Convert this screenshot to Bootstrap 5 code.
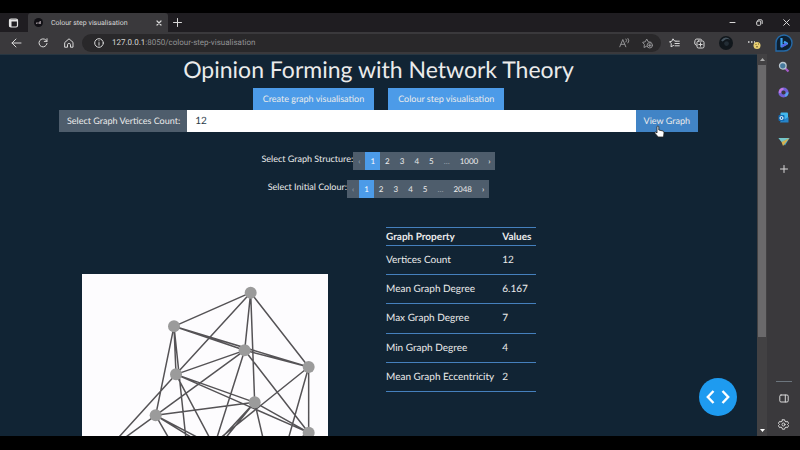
<!DOCTYPE html>
<html lang="en">
<head>
<meta charset="utf-8">
<meta name="viewport" content="width=device-width, initial-scale=1">
<title>Colour step visualisation</title>
<link href="https://cdn.jsdelivr.net/npm/bootstrap@5.3.0/dist/css/bootstrap.min.css" rel="stylesheet">
<style>
  body { font: 9px/14px Lato, sans-serif; background: #000; color: #ebebeb; text-rendering: geometricPrecision; }
  button, input { font: inherit; text-rendering: inherit; }
  svg { display: block; flex: none; }
  .screen { height: 100vh; padding: 13px 0 14px; }
  .chrome-ui { font-family: Roboto, sans-serif; font-size: 7px; color: #d8d8d8; }
  .plain { background: none; border: 0; padding: 0; color: inherit; }
  .line-icon { fill: none; stroke: currentColor; stroke-width: 1; stroke-linecap: round; stroke-linejoin: round; }
  .tab-strip { height: 19px; background: #1f1d21; }
  .browser-tab { width: 140px; background: #3a393c; border-radius: 3px 3px 0 0; padding: 0 6px; margin-left: 9px; }
  .window-buttons { padding-right: 10px; }
  .toolbar { height: 22px; background: #3a393c; padding: 0 7px 0 11px; }
  .tool-icons { gap: 14px; }
  .address { background: #29282a; border-radius: 10px; height: 18px; padding: 0 7px 0 12px; font-size: 8px; }
  .dim { color: #929294; }
  .page { background: #112434; border-top: 1px solid #263642; padding: 0 59px; }
  .page h1 { font-size: 23px; line-height: 29px; font-weight: 400; margin: 0 0 4px; }
  .view-links { gap: 14px; }
  .blue-btn, .slate, .count-box { border: 0; border-radius: 0; padding: 4px 8px; font-size: 9px; line-height: 14px; }
  .blue-btn { background: #4c9be8; color: #ebebeb; }
  .blue-btn:hover { background: #4184c6; color: #fff; }
  .view-links .blue-btn { padding: 4px 10px; }
  .active-btn { background: #4184c6; }
  .slate { background: #4e5d6c; color: #ebebeb; }
  .count-box, .count-box:focus { background: #fff; color: #2b3b49; font-size: 10px; }
  .pager .page-item .page-link { background: #4e5d6c; color: #ebebeb; border: 0; border-radius: 0; margin: 0; padding: 2px 5px; font-size: 8px; line-height: 14px; }
  .pager .page-item.active .page-link { background: #4c9be8; color: #fff; }
  .pager .page-item.disabled .page-link { color: #98a1aa; }
  .second-pager { margin-top: 10px; }
  .results { padding-left: 23px; gap: 58px; margin-top: 29px; }
  .graph-card { background: #fdfcfe; margin-top: 47px; }
  .facts { height: 165px; font-size: 10px; border-top: 1px solid #4580bd; }
  .facts tr { border-bottom: 1px solid #4580bd; }
  .facts thead tr { height: 18px; }
  .facts td, .facts th { padding: 0 8px 0 0; }
  .facts th:last-child { padding-right: 2px; }
  .scroll-track { width: 10px; background: #424143; }
  .scroll-thumb { background: #6a696b; width: 8px; height: 272px; }
  .side-rail { width: 33px; background: #3a393c; padding: 7px 0 6px; }
  .rail-apps { gap: 14px; }
  .dev-button { position: absolute; right: 20px; bottom: 20px; width: 38px; height: 38px; border-radius: 50%; background: #1e9bf0; }
  .hand { position: absolute; right: 33px; bottom: -6px; pointer-events: none; z-index: 6; }
</style>
<script src="https://cdn.jsdelivr.net/npm/bootstrap@5.3.0/dist/js/bootstrap.bundle.min.js"></script>
</head>
<body>
<div class="screen d-flex flex-column overflow-hidden">
  <header class="chrome-ui flex-shrink-0">
    <div class="tab-strip d-flex align-items-stretch">
      <button class="plain d-flex align-items-center ps-2 ms-0" aria-label="Tab actions">
        <svg width="11" height="10" viewBox="0 0 10 10"><rect x="1" y="1" width="8" height="8" rx="1.5" fill="none" stroke="#e4e4e4" stroke-width="1.2"/><path d="M1 1.5h8v2H1zM1 3h2v6H1z" fill="#e4e4e4"/></svg>
      </button>
      <div class="browser-tab d-flex align-items-center">
        <svg width="9" height="9" viewBox="0 0 9 9"><circle cx="4.5" cy="4.500" r="4.500" fill="#111015"/><path d="M2.500 6V4.500M4 6V4M5.500 6V3.500M6.500 6V3" stroke="#8c8389"/></svg>
        <span class="text-nowrap ms-1 ps-1 flex-fill">Colour step visualisation</span>
        <button class="plain" aria-label="Close tab"><svg class="line-icon" width="6" height="6" viewBox="0 0 6 6"><path d="M1 1l4 4M5 1L1 5" stroke-width="1.200"/></svg></button>
      </div>
      <button class="plain ms-1 ps-0" aria-label="New tab"><svg class="line-icon" width="11" height="9" viewBox="0 0 9 9"><path d="M4.500 .5v8M.5 4.500h8"/></svg></button>
      <div class="window-buttons d-flex align-items-center ms-auto gap-3">
        <button class="plain me-1" aria-label="Minimise"><svg class="line-icon" width="7" height="7" viewBox="0 0 7 7"><path d="M1 3.500h5"/></svg></button>
        <button class="plain ms-0 me-1" aria-label="Restore"><svg class="line-icon" width="7" height="7" viewBox="0 0 7 7"><rect x=".7" y="2" width="4" height="4.300" rx="1"/><path d="M2.500 .8h2.700q1 0 1 1v2.700"/></svg></button>
        <button class="plain" aria-label="Close"><svg class="line-icon" width="7" height="7" viewBox="0 0 7 7"><path d="M.7 .7l5.600 5.600M6.300 .7L.7 6.300"/></svg></button>
      </div>
    </div>
    <div class="toolbar d-flex align-items-center">
      <button class="plain" aria-label="Back"><svg class="line-icon" width="11" height="10" viewBox="0 0 11 10"><path d="M10 5H1M5 1L1 5l4 4"/></svg></button>
      <button class="plain ms-3" aria-label="Reload"><svg class="line-icon" width="10" height="10" viewBox="0 0 10 10"><path d="M9 5.500A4 4 0 1 1 8 2.200L9 3.200M9 .7v2.700H6.300"/></svg></button>
      <button class="plain ms-3" aria-label="Home"><svg class="line-icon" width="10" height="10" viewBox="0 0 10 10"><path d="M1 4.300L5 .8l4 3.500V9.200H6.500V6.500Q6.500 5.500 5 5.500T3.500 6.500V9.200H1z"/></svg></button>
      <div class="address flex-fill d-flex align-items-center ms-2 me-2">
        <svg class="line-icon" width="10" height="10" viewBox="0 0 10 10"><circle cx="5" cy="5" r="4.300"/><path d="M5 4.600v2.600M5 2.700v.2"/></svg>
        <span class="ms-2 text-nowrap">127.0.0.1<span class="dim">:8050/colour-step-visualisation</span></span>
        <span class="dim ms-auto d-flex align-items-center gap-2">
          <svg class="line-icon me-1" width="11" height="10" viewBox="0 0 11 10"><path d="M.8 8.800L3.800 1.500l3 7.300M1.900 6.300h3.800M7 1q1.500 1.500 0 3M9 .5q2 2.500 0 4.500"/></svg>
          <svg class="line-icon" width="12" height="11" viewBox="0 0 12 11"><path d="M4.500 8.300L2 9.500l.4-3L.6 4.300l2.700-.5L4.700 1l1.500 2.800 2.800.5"/><circle cx="7.800" cy="7.300" r="2.700"/><path d="M7.800 6v2.600M6.500 7.300h2.600"/></svg>
        </span>
      </div>
      <div class="tool-icons d-flex align-items-center">
        <svg class="line-icon" width="11" height="10" viewBox="0 0 11 10"><path d="M7 3.200L5.500 3 4 .8 2.800 3.300.5 3.700l1.800 2L2 8.800l2.500-1.300M7 3.200h3.300M6 5.500h4.300M6 7.800h4.300"/></svg>
        <svg class="line-icon" width="11" height="11" viewBox="0 0 11 11"><rect x="3" y="3" width="7" height="7" rx="1.500"/><path d="M6.500 4.800v3.400M4.800 6.500h3.400M2.200 7.200Q.5 6.500.7 5L1 2.500Q1.300 1 2.800 1l3.700.2Q7.700 1.300 7.700 2"/></svg>
        <svg width="14" height="14" viewBox="0 0 13 13"><circle cx="6.500" cy="6.500" r="6.500" fill="#11171c"/><path d="M2 4Q6-1 10.500 3.500 7 2 5 4T2 4z" fill="#45535e"/><circle cx="7" cy="7" r="2.200" fill="#232d35"/></svg>
        <svg width="14" height="14" viewBox="0 0 14 14"><path d="M1 6h1.500M4 6h1.500M7 6h1" stroke="#ddd" stroke-width="1.300"/><circle cx="10" cy="9.500" r="3.500" fill="#e8cf72"/><path d="M8.500 8.500h1M11 8h1M9 10.800h2" stroke="#6d5a28"/></svg>
        <svg width="18" height="18" viewBox="0 0 18 18"><path d="M1 17V9a8 8 0 1 1 8 8z" fill="#0d2032" stroke="#256aa8" stroke-width="1.400"/><path d="M6.500 4v8.500l5.500-3-3-1.700" fill="none" stroke="#3ba3f0" stroke-width="2.200" stroke-linejoin="round"/><path d="M6.500 12.500l5.500-3" stroke="#5865e8" stroke-width="2"/></svg>
      </div>
    </div>
  </header>
  <div class="d-flex flex-fill overflow-hidden">
    <main class="page flex-fill position-relative overflow-hidden">
      <h1 class="text-center">Opinion Forming with Network Theory</h1>
      <nav class="view-links d-flex justify-content-center" aria-label="Views">
        <a class="btn blue-btn" href="#create">Create graph visualisation</a>
        <a class="btn blue-btn" href="#step">Colour step visualisation</a>
      </nav>
      <form class="input-group position-relative">
        <label class="input-group-text slate" for="count">Select Graph Vertices Count:</label>
        <input class="form-control count-box" id="count" value="12">
        <button class="btn blue-btn active-btn" type="button">View Graph</button>
        <svg class="hand" width="11" height="13" viewBox="0 0 11 13"><path d="M3 1.500q1-1 1.800 0V5l4.200 1q1.300.4 1 2L9.500 12H4.200L1 8.300q-.6-1.300.7-1.300L3 8z" fill="#fff" stroke="#222" stroke-width=".8"/></svg>
      </form>
      <div class="d-flex justify-content-center mt-3 pt-1">
        <span>Select Graph Structure:</span>
        <ul class="pagination pager m-0">
          <li class="page-item disabled"><a class="page-link">‹</a></li>
          <li class="page-item active"><a class="page-link" href="#s1">1</a></li>
          <li class="page-item"><a class="page-link" href="#s2">2</a></li>
          <li class="page-item"><a class="page-link" href="#s3">3</a></li>
          <li class="page-item"><a class="page-link" href="#s4">4</a></li>
          <li class="page-item"><a class="page-link" href="#s5">5</a></li>
          <li class="page-item disabled"><a class="page-link">…</a></li>
          <li class="page-item"><a class="page-link" href="#s1000">1000</a></li>
          <li class="page-item"><a class="page-link" href="#next">›</a></li>
        </ul>
      </div>
      <div class="second-pager d-flex justify-content-center">
        <span>Select Initial Colour:</span>
        <ul class="pagination pager m-0">
          <li class="page-item disabled"><a class="page-link">‹</a></li>
          <li class="page-item active"><a class="page-link" href="#c1">1</a></li>
          <li class="page-item"><a class="page-link" href="#c2">2</a></li>
          <li class="page-item"><a class="page-link" href="#c3">3</a></li>
          <li class="page-item"><a class="page-link" href="#c4">4</a></li>
          <li class="page-item"><a class="page-link" href="#c5">5</a></li>
          <li class="page-item disabled"><a class="page-link">…</a></li>
          <li class="page-item"><a class="page-link" href="#c2048">2048</a></li>
          <li class="page-item"><a class="page-link" href="#cnext">›</a></li>
        </ul>
      </div>
      <div class="results d-flex align-items-start">
        <div class="graph-card">
          <svg width="246" height="246" viewBox="20 26 738 738" role="img" aria-label="Network graph">
            <g stroke="#555356" stroke-width="4.500">
              <path d="M526 82L296 183M526 82L302 327M526 82L508 255M526 82L538 411M526 82L700 305M296 183L508 255M296 183L700 305M296 183L241 450M296 183L302 327M296 183L336 560M508 255L700 305M508 255L302 327M508 255L241 450M508 255L408 570M508 255L700 502M302 327L538 411M302 327L700 502M302 327L90 560M302 327L428 565M241 450L538 411M241 450L90 560M241 450L310 570M241 450L460 565M241 450L420 560M538 411L395 565M538 411L408 570M538 411L700 502M538 411L575 570M700 305L395 550M700 305L700 502M700 305L625 570M700 502L560 590"/>
            </g>
            <g fill="#9b9b9b">
              <circle cx="526" cy="82" r="18"/><circle cx="296" cy="183" r="18"/><circle cx="508" cy="255" r="18"/><circle cx="700" cy="305" r="18"/><circle cx="302" cy="327" r="18"/><circle cx="538" cy="411" r="18"/><circle cx="241" cy="450" r="18"/><circle cx="700" cy="502" r="18"/>
            </g>
          </svg>
        </div>
        <table class="facts text-nowrap">
          <thead><tr><th>Graph Property</th><th>Values</th></tr></thead>
          <tbody>
            <tr><td>Vertices Count</td><td>12</td></tr>
            <tr><td>Mean Graph Degree</td><td>6.167</td></tr>
            <tr><td>Max Graph Degree</td><td>7</td></tr>
            <tr><td>Min Graph Degree</td><td>4</td></tr>
            <tr><td>Mean Graph Eccentricity</td><td>2</td></tr>
          </tbody>
        </table>
      </div>
      <button class="plain dev-button d-flex align-items-center justify-content-center" aria-label="Developer tools">
        <svg width="24" height="14" viewBox="0 0 24 14" fill="none" stroke="#fff" stroke-width="2.400"><path d="M7.500 1L1.800 7l5.700 6M16.500 1l5.700 6-5.700 6"/></svg>
      </button>
    </main>
    <div class="scroll-track d-flex flex-column align-items-center flex-shrink-0">
      <svg class="my-1" width="5" height="3" viewBox="0 0 5 3"><path d="M0 3L2.500 0 5 3z" fill="#aaa"/></svg>
      <div class="scroll-thumb"></div>
      <svg class="mt-auto mb-1" width="5" height="3" viewBox="0 0 5 3"><path d="M0 0h5L2.500 3z" fill="#fff"/></svg>
    </div>
    <aside class="side-rail chrome-ui d-flex flex-column align-items-center flex-shrink-0">
      <div class="rail-apps d-flex flex-column align-items-center">
        <svg width="12" height="12" viewBox="0 0 12 12"><path d="M7 7l3.500 3.500" stroke="#a45bc9" stroke-width="2.200"/><circle cx="4.800" cy="4.800" r="3.300" fill="#477a9e" stroke="#b9c6cf" stroke-width="1.300"/></svg>
        <svg width="11" height="11" viewBox="0 0 11 11"><circle cx="5.500" cy="5.500" r="3.600" fill="none" stroke="#7161d8" stroke-width="3"/><path d="M2 6Q1.500 2 5.500 1.800" fill="none" stroke="#c178df" stroke-width="2.300"/><path d="M7 8.800q2.500-1 2.300-3.500" fill="none" stroke="#58a5ef" stroke-width="2.300"/></svg>
        <svg width="11" height="11" viewBox="0 0 11 11"><rect x="2.500" y=".5" width="7.500" height="9.500" rx="1" fill="#42b7ed"/><path d="M2 10l8.500-5v5.500H2z" fill="#2584ca"/><rect x=".5" y="3" width="6" height="6" rx="1" fill="#126bb4"/><circle cx="3.500" cy="6" r="1.500" fill="none" stroke="#fff"/></svg>
        <svg width="12" height="10" viewBox="0 0 12 10"><path d="M.5 1h11L7 8.500z" fill="#43a7cf"/><path d="M.5 1h11L3.500 5z" fill="#75c7ca"/><path d="M3.500 5l8-4L5 9z" fill="#d5b252"/></svg>
        <button class="plain pt-1" aria-label="Add"><svg class="line-icon" width="8" height="8" viewBox="0 0 8 8"><path d="M4 .5v7M.5 4h7"/></svg></button>
      </div>
      <span class="border-top border-secondary mt-auto mb-2 pb-1 px-2"></span>
      <button class="plain mb-3" aria-label="Sidebar"><svg class="line-icon" width="10" height="9" viewBox="0 0 10 9"><rect x=".8" y="1" width="8.400" height="7" rx="1.200"/><path d="M6.300 1v7"/></svg></button>
      <button class="plain" aria-label="Settings"><svg class="line-icon" width="11" height="11" viewBox="0 0 11 11"><path d="M4.400.8h2.200l.4 1.500 1 .6 1.500-.5 1.100 2-1.100 1.100 1.100 1.100-1.100 2L8 8.100l-1 .6-.4 1.500H4.400L4 8.700l-1-.6-1.500.5-1.100-2 1.100-1.100L.4 4.400l1.100-2 1.500.5 1-.6z"/><circle cx="5.500" cy="5.500" r="1.500"/></svg></button>
    </aside>
  </div>
</div>
</body>
</html>
